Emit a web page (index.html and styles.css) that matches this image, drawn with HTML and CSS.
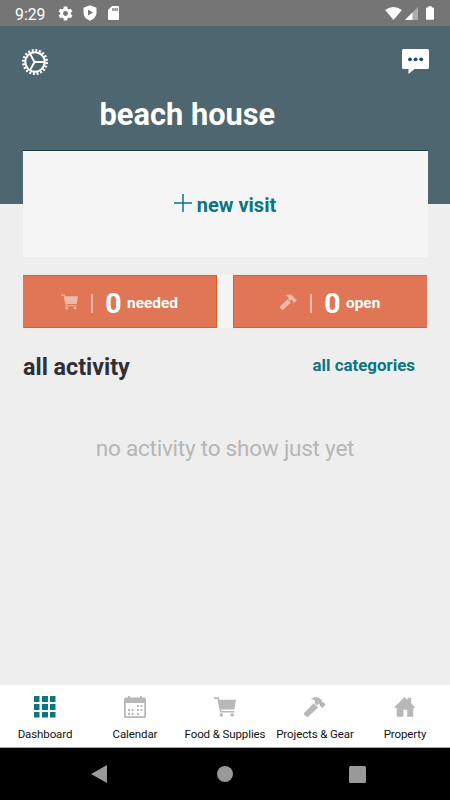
FILE: index.html
```html
<!DOCTYPE html>
<html lang="en">
<head>
<meta charset="utf-8">
<meta name="viewport" content="width=device-width, initial-scale=1">
<title>beach house</title>
<link rel="stylesheet" href="styles.css">
</head>
<body>
<svg class="symbols" aria-hidden="true">
  <symbol id="cart" viewBox="0 0 22 20"><path d="M0 .3h4.800l.7 2.400H22l-1.600 9.900H7l.4 1.500h13v1.500H6L3.400 2H0z"/><circle cx="7.300" cy="18" r="1.800"/><circle cx="18.200" cy="18" r="1.800"/></symbol>
  <symbol id="hammer" viewBox="0 0 22 20"><path d="M7 2C9.500-.3 14-.5 16.800 2.200L18 3.500l-.1 1.300.9.800 1-.3 1.900 2.400L18.300 11 16 8.900V7.600l-1.500-1.100-.6 1.300-.7.800-2.900-2.800.9-1.200C10.600 3 9 2.300 7 2z"/><path d="M9.700 6.300l4.400 4.200-9.700 9.100c-.6.600-1.500.5-2 0L.1 17.800c-.5-.6-.5-1.400 0-1.900z"/></symbol>
</svg>
<div class="screen">
  <div class="status">
    <span class="time">9:29</span>
    <svg class="s-gear" viewBox="0 0 24 24"><path fill-rule="evenodd" d="M19.400 13a7.500 7.500 0 0 0 0-2l2.400-1.800-2.300-4-2.800 1.200a8 8 0 0 0-1.800-1L14.400 2H9.600l-.5 3.400a8 8 0 0 0-1.800 1L4.500 5.200l-2.300 4L4.600 11a7.500 7.500 0 0 0 0 2l-2.400 1.800 2.300 4 2.800-1.200 1.800 1 .5 3.400h4.800l.5-3.400 1.800-1 2.800 1.200 2.300-4zM12 15.500a3.500 3.500 0 1 1 0-7 3.500 3.500 0 0 1 0 7z"/></svg>
    <svg class="s-shield" viewBox="0 0 14 16"><path fill-rule="evenodd" d="M7 .3l6.500 2.500v4.700c0 3.700-2.600 6.700-6.500 8.200C3.100 14.200.5 11.200.5 7.500V2.800zM5 4.600v6l5-3z"/></svg>
    <svg class="s-card" viewBox="0 0 11 14"><path d="M4 0h6q1 0 1 1v12q0 1-1 1H1q-1 0-1-1V4z"/><path class="slots" d="M4.300 2h1.300v3H4.300zM6.400 2h1.300v3H6.400zM8.500 2h1.300v3H8.500z"/></svg>
    <span class="grow"></span>
    <svg class="s-wifi" viewBox="0 0 18 14"><path d="M0 3.200Q9-3 18 3.200L9 14z"/></svg>
    <svg class="s-signal" viewBox="0 0 14 14"><path class="faint" d="M14 0v14H0z"/><path d="M8 6v8H0z"/></svg>
    <svg class="s-battery" viewBox="0 0 9 15"><path d="M2.500 0h4v1.300H8q1 0 1 1V14q0 1-1 1H1q-1 0-1-1V2.300q0-1 1-1h1.500z"/></svg>
  </div>
  <header class="header">
    <div class="actions">
      <svg class="gear" viewBox="0 0 26 26"><circle cx="13" cy="13" r="11.700" fill="none" stroke="#fff" stroke-width="2.600" stroke-dasharray="2 1.675"/><circle cx="13" cy="13" r="9.700" fill="none" stroke="#fff" stroke-width="2"/><path d="M12.500 13h9.500M12.500 13L8 4.800M12.500 13L8 21.200" fill="none" stroke="#fff" stroke-width="1.900"/></svg>
      <svg class="chat" viewBox="0 0 27 25"><path d="M1.500 0h24Q27 0 27 1.500v17q0 1.500-1.500 1.500H12.500L6.500 25v-5h-5Q0 20 0 18.500v-17Q0 0 1.500 0z"/><g fill="#1d4f5b"><circle cx="8" cy="10.300" r="1.900"/><circle cx="13.600" cy="10.300" r="1.900"/><circle cx="19.200" cy="10.300" r="1.900"/></g></svg>
    </div>
    <h1 class="title"><span>beach house</span></h1>
  </header>
  <main class="content">
    <button class="visit"><svg viewBox="0 0 18 18"><path d="M9 0v18M0 9h18" stroke="#0b7581" stroke-width="1.500"/></svg><span>new visit</span></button>
    <div class="counters">
      <button class="counter needed"><svg><use href="#cart"/></svg><i></i><b>0</b><span>needed</span></button>
      <button class="counter open"><svg><use href="#hammer"/></svg><i></i><b>0</b><span>open</span></button>
    </div>
    <div class="heading"><h2>all activity</h2><a>all categories</a></div>
    <p class="empty">no activity to show just yet</p>
  </main>
  <nav class="tabs">
    <div class="tab"><svg class="active" viewBox="0 0 22 22"><path d="M0 0h5.500v6H0zM8 0h6v6H8zM16 0h5.500v6H16zM0 8h5.500v6H0zM8 8h6v6H8zM16 8h5.500v6H16zM0 16h5.500v5.500H0zM8 16h6v5.500H8zM16 16h5.500v5.500H16z"/></svg><span>Dashboard</span></div>
    <div class="tab"><svg viewBox="0 0 22 22"><path fill-rule="evenodd" d="M4 0h2v1.500h10V0h2v1.500h2.500q1.500 0 1.500 1.500v17.500q0 1.500-1.500 1.500h-19Q0 22 0 20.500V3q0-1.500 1.500-1.500H4zM1.800 7v13.200h18.400V7z"/><path d="M13 9h2v2h-2zM16.500 9h2v2h-2zM4 13h2v2H4zM7.500 13h2v2h-2zM13 13h2v2h-2zM16.500 13h2v2h-2zM4 17h2v2H4zM7.500 17h2v2h-2zM13 17h2v2h-2z"/></svg><span>Calendar</span></div>
    <div class="tab"><svg><use href="#cart"/></svg><span>Food &amp; Supplies</span></div>
    <div class="tab"><svg><use href="#hammer"/></svg><span>Projects &amp; Gear</span></div>
    <div class="tab"><svg viewBox="0 0 22 22"><path d="M10.400 1l3.200 3V1.800h3.600v5.400l4.400 4.500h-2.400v9h-6v-7H9.400v7H2.700v-9H0z"/></svg><span>Property</span></div>
  </nav>
  <footer class="system">
    <svg viewBox="0 0 16 18"><path d="M16 0v18L0 9z"/></svg>
    <svg viewBox="0 0 16 16"><circle cx="8" cy="8" r="8"/></svg>
    <svg viewBox="0 0 17 17"><rect width="17" height="17" rx="1.500"/></svg>
  </footer>
</div>
</body>
</html>
```
FILE: styles.css
```css
* { box-sizing: border-box; }
body { margin: 0; font-family: Roboto, sans-serif; }
h1, h2, p { margin: 0; }
button { border: 0; padding: 0; font-family: inherit; }
svg { display: block; flex: none; }
span { white-space: nowrap; }
.symbols { display: none; }
.screen { width: 450px; height: 800px; display: flex; flex-direction: column; background: #eee; overflow: hidden; }

.status { height: 26px; flex: none; display: flex; align-items: center; padding: 0 16px 0 15px; background: #757575; color: #fff; fill: #fff; }
.time { width: 42px; font-size: 15.8px; line-height: 28px; padding-top: 3px; }
.s-gear { width: 17px; height: 17px; margin-right: 9px; }
.s-shield { width: 14px; height: 16px; margin-right: 11px; }
.s-card { width: 11px; height: 14px; }
.slots { fill: #757575; }
.grow { flex: 1; }
.s-wifi { width: 17px; height: 13px; margin-right: 3px; }
.s-signal { width: 13px; height: 13px; margin-right: 8px; }
.faint { opacity: .4; }
.s-battery { width: 8px; height: 14px; }

.header { height: 178px; flex: none; background: #4d666f; color: #fff; padding: 22px 21px 0 22px; }
.actions { display: flex; justify-content: space-between; }
.gear { width: 26px; height: 26px; margin-top: 1px; }
.chat { width: 27px; height: 25px; fill: #fff; margin-top: 1px; }
.title { margin: 21px 0 0 77.500px; font-size: 30.800px; line-height: 38px; font-weight: 700; }

.content { flex: 1; margin-top: -54px; padding: 0 22px; }
.visit { width: 405px; height: 107px; margin-left: .5px; display: flex; align-items: center; justify-content: center; gap: 5px; background: #f5f5f5; color: #0b7581; border-top: 1px solid #163f4a; font-size: 20px; font-weight: 700; }
.visit svg { width: 18px; height: 18px; margin-top: -3px; }
.visit span { padding-top: 1px; }
.counters { margin: 18px 0 0; padding: 0 1px; display: flex; justify-content: space-between; background: linear-gradient(#f4f4f4, #f4f4f4) center / 40px 100% no-repeat; }
.counter { width: 194px; height: 53px; display: flex; align-items: center; background: #e07655; color: #fff; border: 1px solid #df5d1d; border-left-color: #e07655; }
.counter.open { border-left-color: #df5d1d; border-right-color: #e07655; }
.counter svg { width: 17px; height: 16px; fill: #f0b8a7; margin-left: 37px; }
.counter i { width: 2px; height: 19px; background: #f0b8a7; margin: 4px 13px 0 13px; }
.counter b { width: 17px; font-size: 28.500px; line-height: 36px; margin: 4px 0 0 -1px; text-align: center; }
.counter span { font-size: 15.400px; font-weight: 700; margin: 2px 0 0 5px; }
.open svg { margin-left: 46px; }
.heading { height: 48px; margin-top: 15px; display: flex; justify-content: space-between; align-items: center; padding: 0 13px 0 1px; }
.heading h2 { font-size: 23.300px; font-weight: 700; color: #2e3035; }
.heading a { font-size: 16.900px; font-weight: 700; color: #0b7581; margin-top: -5px; }
.empty { margin-top: 42px; text-align: center; font-size: 22.600px; letter-spacing: -.26px; line-height: 32px; color: #b6b6b6; }

.tabs { height: 63px; flex: none; display: grid; grid-template-columns: repeat(5, 90px); background: #fff; border-bottom: 1px solid #aaa; }
.tab { display: flex; flex-direction: column; align-items: center; padding-top: 11px; font-size: 11.500px; letter-spacing: -.1px; line-height: 16px; color: #111; }
.tab svg { width: 22px; height: 22px; fill: #b8b8b8; margin-bottom: 8px; }
.tab .active { fill: #0b7581; }
.system { height: 52px; flex: none; display: flex; align-items: center; background: #000; fill: #999; padding-left: 91px; }
.system svg { width: 16px; height: 18px; }
.system svg:nth-child(2) { height: 16px; margin: 0 116px 0 110px; }
.system svg:nth-child(3) { width: 17px; height: 17px; }
```
